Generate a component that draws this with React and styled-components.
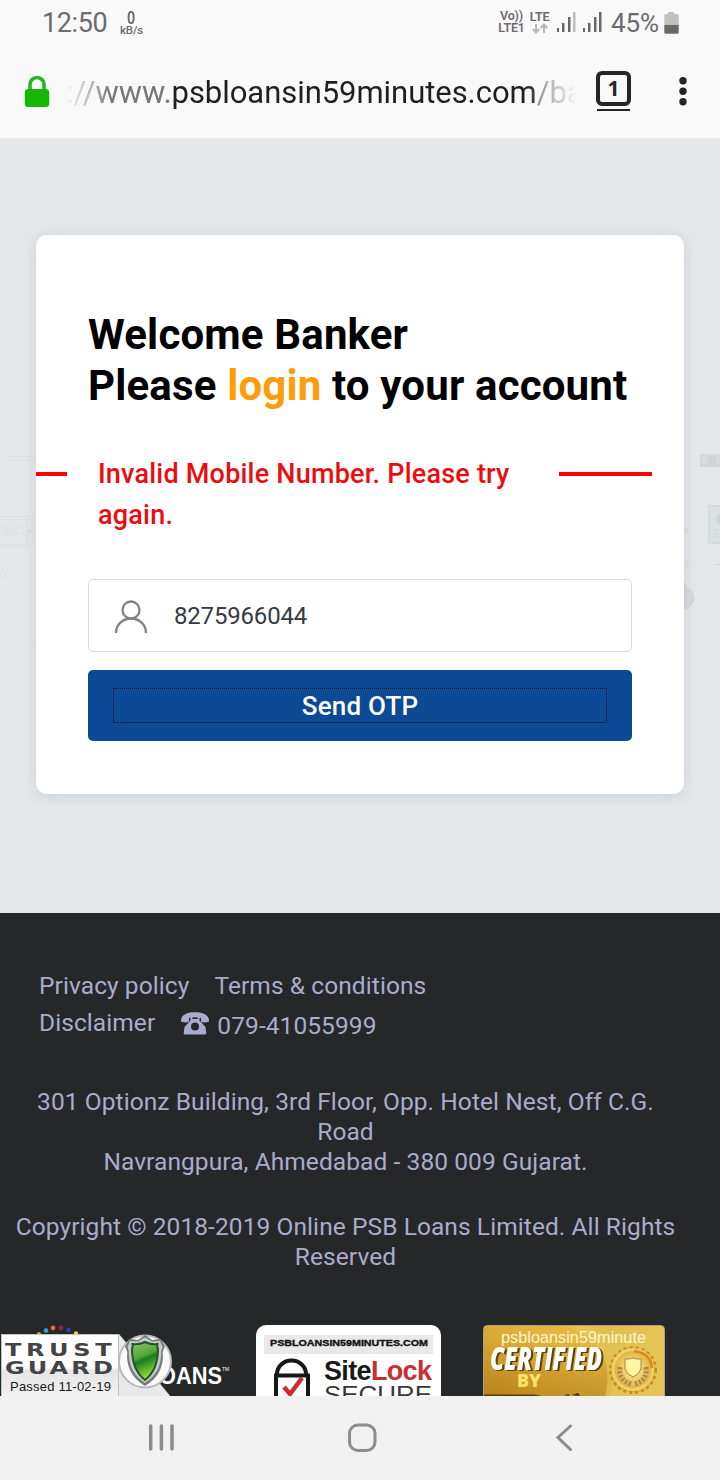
import React from "react";
import styled, { createGlobalStyle } from "styled-components";

const GlobalStyle = createGlobalStyle`
  *, *::before, *::after { box-sizing: border-box; }
  body { margin: 0; font-family: Roboto, "Liberation Sans", sans-serif; background: #252729; }
  svg { display: block; flex: none; }
  h1, p { margin: 0; }
`;

const Screen = styled.div`
  width: 720px;
  height: 1480px;
  display: flex;
  flex-direction: column;
  overflow: hidden;
`;

const StatusBar = styled.div`
  height: 46px;
  display: flex;
  align-items: center;
  padding: 0 41px 0 42px;
  background: #f9f9f9;
  color: #6b6b6b;
`;

const Clock = styled.span`
  width: 78px;
  font-size: 27px;
  letter-spacing: -0.4px;
  white-space: nowrap;
`;

const Stack = styled.div`
  display: flex;
  flex-direction: column;
  align-items: center;
  width: ${(p) => p.$width}px;
  margin-top: -2px;
  font-size: 12.5px;
  font-weight: 600;
  line-height: 12px;
  letter-spacing: -0.2px;
  white-space: nowrap;
`;

const Rate = styled.span`
  height: 14px;
  font-size: 18px;
  line-height: 15px;
  transform: scaleX(0.8);
`;

const RateUnit = styled.span`
  height: 10px;
  font-size: 11.5px;
  font-weight: 500;
  line-height: 13px;
`;

const Spacer = styled.div`
  flex: 1;
`;

const Signals = styled.div`
  display: flex;
  gap: 7px;
  margin: -1px 1px 0 3px;
`;

const Percent = styled.span`
  margin: 0 5px 0 8px;
  font-size: 26px;
  letter-spacing: -0.1px;
`;

const AddressBar = styled.div`
  height: 92px;
  display: flex;
  align-items: center;
  padding: 0 28px 0 24px;
  background: #f9f9f9;
`;

const Url = styled.div`
  width: 511px;
  margin: 2px 0 0 16px;
  overflow: hidden;
  white-space: nowrap;
  font-size: 31px;
  line-height: 44px;
  letter-spacing: -0.05px;
  color: #777;
  mask-image: linear-gradient(90deg, transparent 0, #000 46px, #000 460px, transparent 511px);
  b { font-weight: 400; color: #1f1f1f; }
`;

const TabCounter = styled.div`
  width: 35px;
  height: 40px;
  margin: -2px 48px 0 19px;
  position: relative;
  &::after {
    content: "";
    position: absolute;
    left: 1px;
    right: 1px;
    bottom: 0;
    height: 2px;
    background: #252525;
  }
`;

const TabBox = styled.div`
  height: 35px;
  display: flex;
  align-items: center;
  justify-content: center;
  border: 4px solid #252525;
  border-radius: 6px;
  font: 700 21px/27px "Open Sans", sans-serif;
  color: #252525;
`;

const Page = styled.main`
  height: 775px;
  padding: 97px 36px 0;
  position: relative;
  background: #e4e8eb;
`;

const Backdrop = styled.svg`
  position: absolute;
  left: 0;
  top: 300px;
`;

const Card = styled.section`
  position: relative;
  height: 559px;
  padding: 74px 52px 0;
  border-radius: 11px;
  background: #fff;
  box-shadow: 0 2px 14px rgba(60, 80, 95, 0.16);
`;

const Title = styled.h1`
  font-size: 42px;
  line-height: 51px;
  font-weight: 700;
  letter-spacing: 0.16px;
  color: #000;
  white-space: nowrap;
  span { color: #ff9c08; }
`;

const ErrorRow = styled.div`
  display: flex;
  margin: 42px -20px 0 -52px;
  height: 82px;
`;

const Rule = styled.div`
  width: ${(p) => p.$width}px;
  height: 4px;
  margin-top: 19px;
  background: #f80509;
`;

const ErrorText = styled.p`
  width: 461px;
  margin: 1px 0 0 31px;
  font-size: 27px;
  line-height: 41px;
  font-weight: 500;
  letter-spacing: 0.21px;
  color: #ec0c10;
  white-space: nowrap;
`;

const Field = styled.div`
  height: 73px;
  margin-top: 44px;
  padding-left: 26px;
  display: flex;
  align-items: center;
  border: 1px solid #d8dadc;
  border-radius: 5px;
  font-size: 24px;
  letter-spacing: -0.18px;
  color: #363b3f;
`;

const FieldValue = styled.span`
  margin-left: 27px;
`;

const SendButton = styled.button`
  display: block;
  width: 100%;
  height: 71px;
  margin-top: 18px;
  padding: 18px 25px;
  border: 0;
  border-radius: 5px;
  background: #0d4995;
  color: #fff;
  font: 500 26px Roboto, sans-serif;
  letter-spacing: 0.2px;
  span {
    display: flex;
    align-items: center;
    justify-content: center;
    height: 35px;
    border: 1px dotted #050e26;
  }
`;

const Footer = styled.footer`
  height: 483px;
  padding-top: 54px;
  overflow: hidden;
  background: #252729;
  color: #aaaccb;
  font-size: 24.5px;
  letter-spacing: 0.08px;
`;

const LinkRow = styled.div`
  display: flex;
  align-items: center;
  height: 37px;
  margin-left: 39px;
  gap: ${(p) => p.$gap}px;
  white-space: nowrap;
`;

const Phone = styled.span`
  display: flex;
  align-items: center;
  gap: 8px;
  margin-top: 5px;
  svg { margin-top: -4px; }
`;

const Paragraph = styled.p`
  width: 691px;
  margin-top: ${(p) => p.$top}px;
  text-align: center;
  line-height: 30px;
  white-space: nowrap;
`;

const Badges = styled.div`
  display: flex;
  align-items: flex-start;
  margin-top: 53px;
  letter-spacing: 0;
`;

const BadgeArt = styled.svg`
  margin-left: ${(p) => p.$left || 0}px;
`;

const RaisedText = styled.text`
  filter: drop-shadow(2px 1px 0 #5c430e);
`;

const NavBar = styled.nav`
  height: 84px;
  display: flex;
  align-items: center;
  padding-left: 148px;
  background: #f1f1f1;
`;

const NavIcon = styled.svg`
  margin-right: ${(p) => p.$gap || 0}px;
`;

const Signal = ({ weak }) => (
  <svg width="19" height="21" viewBox="0 0 19 21" fill="#686868">
    <rect x="0" y="16" width="2" height="4" />
    <rect x="5" y="11" width="2.500" height="9" />
    <rect x="11" y="5" width="2.500" height="15" />
    <rect x="16" y="0" width="2.500" height="20" fill={weak ? "#bcbcbc" : "#686868"} />
  </svg>
);

const Arrows = () => (
  <svg width="16" height="11" viewBox="0 0 16 11" fill="none" stroke="#b8b8b8" strokeWidth="2">
    <path d="M4 1v8.500M0.800 6L4 9.500 7.200 6M12 10v-8.500M8.800 5L12 1.500 15.200 5" />
  </svg>
);

const Battery = () => (
  <svg width="15" height="22" viewBox="0 0 15 22">
    <path d="M4 0h6v2h3.500l1.200 1.200V13H.3V3.200L1.500 2H4z" fill="#c0c0c0" />
    <path d="M.3 13h14.400v7.700l-1 1H1.300l-1-1z" fill="#696969" />
  </svg>
);

const Lock = () => (
  <svg width="26" height="35" viewBox="0 0 26 35">
    <path d="M6 16V9.500a7 7 0 0 1 14 0V16" fill="none" stroke="#22b91d" strokeWidth="3.600" />
    <rect x="0.800" y="14" width="24.400" height="18" rx="3.500" fill="#15b800" />
  </svg>
);

const Dots = () => (
  <svg width="9" height="30" viewBox="0 0 9 30" fill="#242424">
    <circle cx="4" cy="3.700" r="3.700" />
    <circle cx="4" cy="14.200" r="3.700" />
    <circle cx="4" cy="24.700" r="3.700" />
  </svg>
);

const Person = () => (
  <svg width="32" height="34" viewBox="0 0 32 34" fill="none" stroke="#828282" strokeWidth="2.300">
    <circle cx="16" cy="11" r="8.500" />
    <path d="M1.100 34v-.5c0-7.700 6.400-14 14.900-14s14.900 6.300 14.900 14v.5" />
  </svg>
);

const Telephone = () => (
  <svg width="28" height="23" viewBox="0 0 28 23" fill="#aaaccb">
    <path d="M0 8.500C.3 3 5.500.3 14 .3S27.700 3 28 8.500q0 1.500-1 1.600-3.500.6-6 .1-1-.2-1-1.500V6Q14 4.600 8 6v2.700q0 1.300-1 1.500-2.500.5-6-.1-1-.1-1-1.600z" />
    <path
      fillRule="evenodd"
      d="M9.500 4.500h1.800V7h5.400V4.500h1.800V8.500L24.500 15l.8 6q0 1.500-1.500 1.500H4.200q-1.500 0-1.500-1.500l.8-6L9.500 8.500zM14 10.500a4 4 0 1 0 0 8 4 4 0 0 0 0-8z"
    />
  </svg>
);

const BackgroundArt = () => (
  <Backdrop width="720" height="210" viewBox="0 438 720 210" fill="none" stroke="#dbe0e3" strokeWidth="1">
    <path d="M7 456.500h25M4 460.500h31" />
    <rect x="-3" y="516.500" width="36" height="30" rx="2" />
    <path d="M-2 519.500h29v25H-2" />
    <path strokeWidth="0.500" d="M2 522v18M7 522v18M12 522v18M17 522v18M22 522v18M0 526h25M0 533h25" />
    <path d="M2 532l5-4 5 4 5-4 6-4M2 536l5-4 5 4 5-4 6 2" />
    <circle cx="30" cy="531" r="1.300" fill="#d3d9dc" />
    <circle cx="7" cy="576" r="2.500" />
    <path d="M4 567l-5 12M32 640.500h4" />
    <path d="M701 455h19v11h-19z" fill="#d8dcdf" stroke="#d2d7da" strokeWidth="2" />
    <circle cx="712" cy="460.500" r="5" fill="#ced3d7" stroke="none" />
    <path d="M709 506h15v37h-15z" fill="#dce1e4" stroke="#d5dadd" strokeWidth="2" />
    <circle cx="722" cy="519" r="6" fill="#cfd5d8" stroke="none" />
    <path d="M714 530h6M714 534h5M714 537h6M715 564.500h5" stroke="#d0d6d9" />
    <circle cx="685" cy="531" r="2" strokeWidth="2" />
    <circle cx="688" cy="565" r="2.500" strokeWidth="1.500" />
    <path d="M684 584h2v3.500a11 11 0 0 1-2 21.500z" fill="#d5dadd" stroke="#d0d5d9" />
  </Backdrop>
);

const sans = "Liberation Sans, sans-serif";

const TrustGuard = () => (
  <BadgeArt width="236" height="78" viewBox="0 0 236 78">
    <defs>
      <linearGradient id="panel" x2="0" y2="1">
        <stop offset="0.480" stopColor="#fff" />
        <stop offset="0.520" stopColor="#e5e5e5" />
        <stop offset="1" stopColor="#f5f5f5" />
      </linearGradient>
      <linearGradient id="shield" x2="0.300" y2="1">
        <stop offset="0" stopColor="#8fc66e" />
        <stop offset="0.450" stopColor="#54a638" />
        <stop offset="0.550" stopColor="#177c21" />
        <stop offset="1" stopColor="#96dc42" />
      </linearGradient>
    </defs>
    <circle cx="39" cy="9.500" r="2.200" fill="#dcbb28" />
    <circle cx="46" cy="5.500" r="2.300" fill="#29a9df" />
    <circle cx="53" cy="3" r="2.400" fill="#e76b31" />
    <circle cx="61" cy="3" r="2.400" fill="#8f2445" />
    <circle cx="68.500" cy="5" r="2.300" fill="#254b98" />
    <circle cx="76" cy="8.500" r="2.200" fill="#f8ce27" />
    <path d="M1 9h118l57 69H1z" fill="#e9e9e9" />
    <path d="M1.500 9.500h117V78H1.500z" fill="url(#panel)" stroke="#c2c2c2" />
    <g fontFamily="DejaVu Sans, sans-serif" fontWeight="700" fontSize="18.500" fill="#444446" transform="scale(1.300 1)">
      <text x="3.800" y="30.800" textLength="82">TRUST</text>
      <text x="3.800" y="48.800" textLength="83">GUARD</text>
    </g>
    <text x="10" y="66" fontFamily={sans} fontSize="13" fill="#171717" textLength="101">Passed 11-02-19</text>
    <text x="159" y="59" fontFamily={sans} fontWeight="700" fontSize="24" fill="#fff" textLength="63" lengthAdjust="spacingAndGlyphs">OANS</text>
    <text x="222" y="46" fontFamily={sans} fontSize="5" fill="#fff">TM</text>
    <circle cx="145" cy="36.500" r="26" fill="#fafafa" stroke="#b8babb" strokeWidth="2" />
    <path d="M145 10l7 5 9-1 4 8q-3 4-2 10-1 19-18 29-17-10-18-29 1-6-2-10l4-8 9 1z" fill="#777d7d" />
    <path d="M145 12.500l7 4 8-.5 2.500 6q-2 4-1.500 9-1 17-16 27-15-10-16-27 .5-5-1.500-9L130 16l8 .5z" fill="#c9cccc" />
    <path d="M145 17q6 3 12.500 2-.5 3 .5 5 0 21-13 31-13-10-13-31 1-2 .5-5 6.500 1 12.500-2z" fill="url(#shield)" stroke="#23552a" strokeWidth="2" />
  </BadgeArt>
);

const SiteLock = () => (
  <BadgeArt $left={20} width="185" height="84" viewBox="0 0 185 84">
    <rect width="185" height="100" rx="10" fill="#fff" />
    <rect x="8" y="10" width="169" height="19" fill="#e9e9e9" />
    <text x="14" y="21" fontFamily={sans} fontWeight="700" fontSize="9.500" fill="#151515" stroke="#151515" strokeWidth="0.400" textLength="158" lengthAdjust="spacingAndGlyphs">PSBLOANSIN59MINUTES.COM</text>
    <path d="M21 50v-1a14.500 13.500 0 0 1 29 0v1M20 84V50.500h32V84" fill="none" stroke="#171717" strokeWidth="4" />
    <path d="M28 62l6 7 12-16" fill="none" stroke="#d02a2d" strokeWidth="4.500" />
    <text x="68" y="54.500" fontFamily={sans} fontWeight="700" fontSize="27" fill="#191919" textLength="108">
      Site<tspan fill="#c92e31">Lock</tspan>
    </text>
    <text x="68" y="77.500" fontFamily={sans} fontSize="24" fill="#383838" textLength="108" lengthAdjust="spacingAndGlyphs">SECURE</text>
  </BadgeArt>
);

const Certified = () => (
  <BadgeArt $left={42} width="182" height="78" viewBox="0 0 182 78">
    <defs>
      <linearGradient id="gold" x2="1" y2="0.200">
        <stop offset="0" stopColor="#be861b" />
        <stop offset="0.450" stopColor="#d8a532" />
        <stop offset="1" stopColor="#dfbd50" />
      </linearGradient>
      <linearGradient id="shade" x2="0" y2="1">
        <stop offset="0.100" stopColor="#f4cc50" stopOpacity="0.500" />
        <stop offset="1" stopColor="#a06808" stopOpacity="0.450" />
      </linearGradient>
      <radialGradient id="seal">
        <stop offset="0" stopColor="#fff3a0" />
        <stop offset="1" stopColor="#dfad3a" />
      </radialGradient>
    </defs>
    <rect x="0.500" y="0.500" width="181" height="90" rx="4" fill="url(#gold)" stroke="#aaa187" />
    <path d="M1 1h103q33 28 22 77H1z" fill="url(#shade)" />
    <path d="M85 1h91q5 0 5 5v72h-61Q138 25 85 1z" fill="#e6c857" opacity="0.700" />
    <circle cx="150" cy="45" r="22.500" fill="#dcae3f" stroke="#c18d27" strokeWidth="3" strokeDasharray="3 3" />
    <circle cx="150" cy="44.500" r="20" fill="url(#seal)" stroke="#f1cd65" strokeWidth="3" />
    <path d="M151 26q17 2 18 17" fill="none" stroke="#db8c16" strokeWidth="2.500" />
    <path d="M137 42q-2 13 11 17M163 42q2 13-11 17" fill="none" stroke="#b58a48" strokeWidth="5" strokeDasharray="2.500 1.500" />
    <path d="M142 34h4l4-1 4 1h4v10q-2 6-8 8-6-2-8-8z" fill="#fff6a5" stroke="#ad8445" />
    <text x="18" y="18" fontFamily={sans} fontSize="16" fill="#fff5d2" textLength="145" lengthAdjust="spacingAndGlyphs">psbloansin59minute</text>
    <RaisedText x="7" y="45" fontFamily="Open Sans, sans-serif" fontWeight="800" fontStyle="italic" fontSize="31" fill="#fff" textLength="112" lengthAdjust="spacingAndGlyphs">CERTIFIED</RaisedText>
    <text x="34" y="62" fontFamily="Open Sans, sans-serif" fontWeight="800" fontSize="18" fill="#fbe268" textLength="24" lengthAdjust="spacingAndGlyphs">BY</text>
    <path d="M1 69.500h50l44 8.500H1z" fill="#5a370a" />
    <path d="M81 70l5-1v2zM89 70l6-2 2 3z" fill="#41351a" />
  </BadgeArt>
);

export default function App() {
  return (
    <Screen>
      <GlobalStyle />
      <StatusBar>
        <Clock>12:50</Clock>
        <Stack $width={23}>
          <Rate>0</Rate>
          <RateUnit>kB/s</RateUnit>
        </Stack>
        <Spacer />
        <Stack $width={27}>
          <span>Vo))</span>
          <span>LTE1</span>
        </Stack>
        <Stack $width={29}>
          <span>LTE</span>
          <Arrows />
        </Stack>
        <Signals>
          <Signal weak />
          <Signal />
        </Signals>
        <Percent>45%</Percent>
        <Battery />
      </StatusBar>
      <AddressBar>
        <Lock />
        <Url>
          ://www.<b>psbloansin59minutes.com</b>/ba
        </Url>
        <TabCounter>
          <TabBox>1</TabBox>
        </TabCounter>
        <Dots />
      </AddressBar>
      <Page>
        <BackgroundArt />
        <Card>
          <Title>
            Welcome Banker
            <br />
            Please <span>login</span> to your account
          </Title>
          <ErrorRow>
            <Rule $width={31} />
            <ErrorText>
              Invalid Mobile Number. Please try
              <br />
              again.
            </ErrorText>
            <Rule $width={93} />
          </ErrorRow>
          <Field>
            <Person />
            <FieldValue>8275966044</FieldValue>
          </Field>
          <SendButton>
            <span>Send OTP</span>
          </SendButton>
        </Card>
      </Page>
      <Footer>
        <LinkRow $gap={25}>
          <span>Privacy policy</span>
          <span>Terms &amp; conditions</span>
        </LinkRow>
        <LinkRow $gap={26}>
          <span>Disclaimer</span>
          <Phone>
            <Telephone />
            079-41055999
          </Phone>
        </LinkRow>
        <Paragraph $top={46}>
          301 Optionz Building, 3rd Floor, Opp. Hotel Nest, Off C.G.
          <br />
          Road
          <br />
          Navrangpura, Ahmedabad - 380 009 Gujarat.
        </Paragraph>
        <Paragraph $top={35}>
          Copyright © 2018-2019 Online PSB Loans Limited. All Rights
          <br />
          Reserved
        </Paragraph>
        <Badges>
          <TrustGuard />
          <SiteLock />
          <Certified />
        </Badges>
      </Footer>
      <NavBar>
        <NavIcon $gap={172} width="27" height="28" viewBox="0 0 27 28" stroke="#8c8c8c" strokeWidth="3.500" strokeLinecap="round">
          <path d="M2.700 2v23M13.400 2v23M24 2v23" />
        </NavIcon>
        <NavIcon $gap={178} width="30" height="30" viewBox="0 0 30 30" fill="none" stroke="#8c8c8c" strokeWidth="3">
          <rect x="2.500" y="2" width="25.500" height="25.500" rx="8.500" />
        </NavIcon>
        <NavIcon width="18" height="28" viewBox="0 0 18 28" fill="none" stroke="#8c8c8c" strokeWidth="3" strokeLinecap="round">
          <path d="M15.500 2L3 13.500l12.500 12" />
        </NavIcon>
      </NavBar>
    </Screen>
  );
}
